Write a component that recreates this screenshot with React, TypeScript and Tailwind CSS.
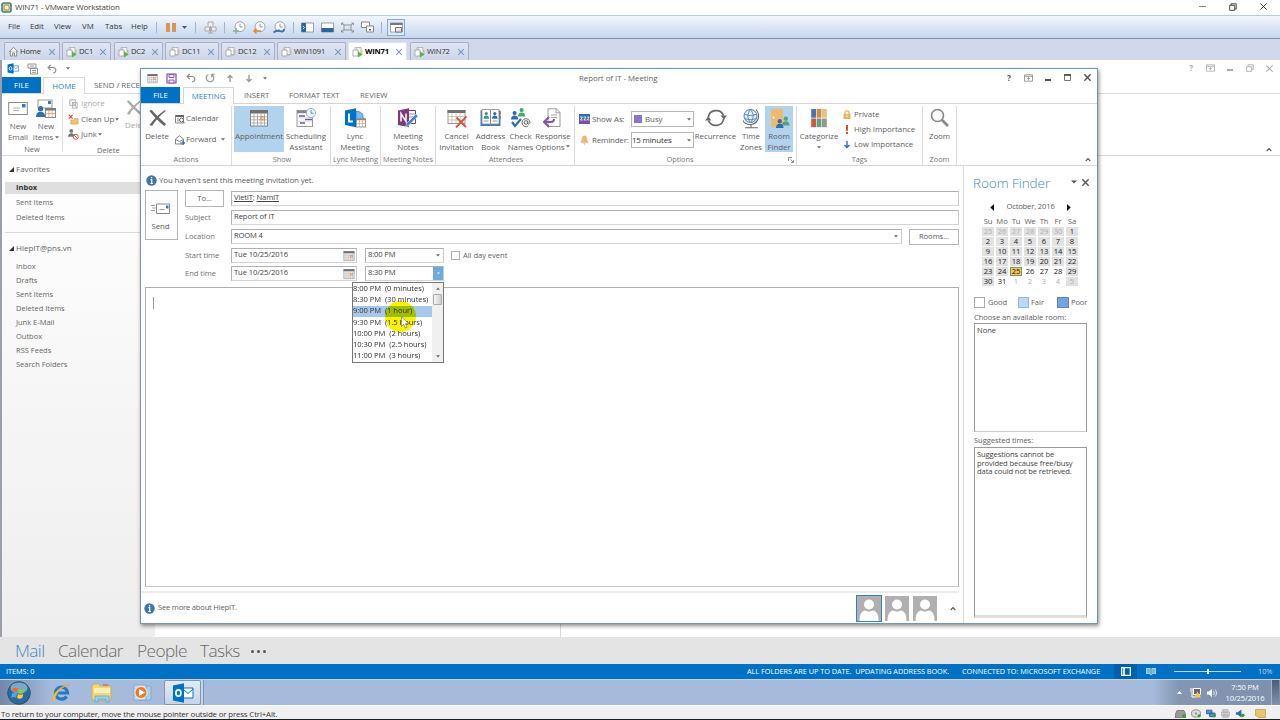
import type { ReactNode } from 'react';
import clsx from 'clsx';

const TABS = [
  { label: 'Home', cls: 'w-[56px]', running: false },
  { label: 'DC1', cls: 'w-[49px] ml-[2px]', running: true },
  { label: 'DC2', cls: 'w-[49px] ml-[3px]', running: true },
  { label: 'DC11', cls: 'w-[54px] ml-[2px]', running: false },
  { label: 'DC12', cls: 'w-[54px] ml-[2px]', running: false },
  { label: 'WIN1091', cls: 'w-[69px] ml-[2px]', running: false },
  { label: 'WIN71', cls: 'w-[59px] ml-[2px]', running: true },
  { label: 'WIN72', cls: 'w-[59px] ml-[3px]', running: true },
];

const FOLDERS = ['Inbox', 'Drafts', 'Sent Items', 'Deleted Items', 'Junk E-Mail', 'Outbox', 'RSS Feeds', 'Search Folders'];

const DURATIONS = [
  ['8:00 PM', '(0 minutes)'],
  ['8:30 PM', '(30 minutes)'],
  ['9:00 PM', '(1 hour)'],
  ['9:30 PM', '(1.5 hours)'],
  ['10:00 PM', '(2 hours)'],
  ['10:30 PM', '(2.5 hours)'],
  ['11:00 PM', '(3 hours)'],
];

const WEEKDAYS = ['Su', 'Mo', 'Tu', 'We', 'Th', 'Fr', 'Sa'];

// Six weeks starting on Sunday 25 September 2016
const DAYS = Array.from({ length: 42 }, (_, i) => {
  if (i < 6) return { n: 25 + i, muted: true, shaded: true };
  if (i < 37) return { n: i - 5, muted: false, shaded: i < 30 || i === 34 || i === 35 };
  return { n: i - 36, muted: true, shaded: i === 41 };
});

/* ---------- icons ---------- */

function Svg({ s = 'w-3 h-3', vb = '0 0 12 12', children }: { s?: string; vb?: string; children: ReactNode }) {
  return <svg className={clsx('shrink-0', s)} viewBox={vb} fill="none">{children}</svg>;
}

function Caret({ className = '' }: { className?: string }) {
  return <Svg s={clsx('w-[4px] h-[3px]', className)} vb="0 0 4 3"><path d="M0 .3h4L2 2.5z" fill="#666" /></Svg>;
}

function Chevron({ className = '' }: { className?: string }) {
  return <Svg s={clsx('w-[6px] h-[5px]', className)} vb="0 0 6 5"><path d="M.7 4 3 1.6 5.3 4" stroke="#555" strokeWidth="1.1" /></Svg>;
}

function VmIcon({ running }: { running: boolean }) {
  return (
    <Svg s="w-[12px] h-[12px]">
      <path d="M4 1.5h5v7H4z" fill="#f4f4f6" stroke="#aaa" strokeWidth=".8" />
      <path d="M1 4h5v6H1z" fill="#fff" stroke="#999" strokeWidth=".8" />
      <path d="M2 2.5 4 1M7 10l3-1.5V4" stroke="#aaa" strokeWidth=".7" />
      {running && <path d="M6 5.2 10.5 8.400 6 11.600z" fill="#5cb840" />}
    </Svg>
  );
}

function CalIcon({ s }: { s: string }) {
  return (
    <Svg s={s} vb="0 0 20 20">
      <rect x="1.5" y="2.5" width="17" height="15.5" fill="#fff" stroke="#888" />
      <rect x="1" y="2" width="18" height="3.5" fill="#707070" />
      <path d="M5 5.5V18M8.500 5.5V18M12 5.5V18M15.500 5.5V18M1.500 8.700h17M1.500 11.800h17M1.500 15h17" stroke="#a0a0a0" strokeWidth=".8" />
      <rect x="12" y="8.800" width="3.500" height="3" fill="#f8d8b8" stroke="#e08048" strokeWidth=".9" />
    </Svg>
  );
}

function Cross({ s, color = '#666', w = 1.4 }: { s: string; color?: string; w?: number }) {
  return <Svg s={s} vb="0 0 10 10"><path d="M1.500 1.500l7 7M8.500 1.500l-7 7" stroke={color} strokeWidth={w} /></Svg>;
}

function DeleteX({ s, color }: { s: string; color: string }) {
  return (
    <Svg s={s} vb="0 0 20 20">
      <path d="M1 2.200 3.400.8C8 6 13 11 19.500 16.800l-2 2.200C11 13.500 6 8.500 1 2.200z" fill={color} />
      <path d="M18.200 1 19.200 2.300C13 7 8 12.500 4 19L1.200 17.800C5.500 11.500 11 6 18.200 1z" fill={color} />
    </Svg>
  );
}

function Undo() {
  return <Svg s="w-[10px] h-[10px]" vb="0 0 10 10"><path d="M3.700 1 1 3.500l2.700 2.500M1.200 3.500h4.600c4 0 4 5 .2 5.500" stroke="#8e8e8e" strokeWidth="1.100" /></Svg>;
}

function Redo() {
  return <Svg s="w-[10px] h-[10px]" vb="0 0 10 10"><path d="M3.400 1.500A3.800 3.800 0 1 0 7 1.700M6.800 4.400V1.300h2.800" stroke="#8e8e8e" strokeWidth="1.100" /></Svg>;
}

function ArrowUp({ down = false, color = '#999' }: { down?: boolean; color?: string }) {
  return (
    <Svg s={clsx('w-[8px] h-[9px]', down && 'rotate-180')} vb="0 0 8 9">
      <path d="M4 8V1.500M1.500 4 4 1.500 6.500 4" stroke={color} strokeWidth="1.400" />
    </Svg>
  );
}

function Info() {
  return (
    <Svg s="w-[11px] h-[11px]" vb="0 0 11 11">
      <circle cx="5.500" cy="5.500" r="5.200" fill="#3c74ac" />
      <path d="M5.600 2v1.500M4.400 4.600h1.300v3.800M4.300 8.500h2.700" stroke="#fff" strokeWidth="1.200" />
    </Svg>
  );
}

function Mail() {
  return (
    <Svg s="w-[20px] h-[18px]" vb="0 0 20 18">
      <rect x=".7" y="3.500" width="18.600" height="12" fill="#fff" stroke="#8a8a8a" />
      <path d="M5 9h7M5 11.500h6" stroke="#aaa" strokeWidth=".9" />
      <rect x="14" y="5" width="3.500" height="3.500" fill="#3a7ab8" />
    </Svg>
  );
}

function Person({ x, y, c, k = 1 }: { x: number; y: number; c: string; k?: number }) {
  return (
    <g transform={`translate(${x} ${y}) scale(${k})`} fill={c}>
      <circle cx="4" cy="2.300" r="2.300" />
      <path d="M0 9.500C0 6.500 1.500 5 4 5s4 1.500 4 4.500z" />
    </g>
  );
}

function NewItems() {
  return (
    <Svg s="w-[20px] h-[20px]" vb="0 0 20 20">
      <rect x="2" y="1" width="14" height="8" fill="#fff" stroke="#999" />
      <rect x="12" y="2" width="3" height="3" fill="#3a7ab8" />
      <Person x={0} y={7} c="#2f6eb0" k={1.150} />
      <rect x="9.500" y="9.500" width="10" height="9" fill="#fff" stroke="#888" />
      <path d="M9 10.500h11" stroke="#777" strokeWidth="2" />
      <path d="M12.800 11v7.500M16.200 11v7.500M9.500 14.500h10" stroke="#e09050" strokeWidth=".7" />
    </Svg>
  );
}

function Scheduling() {
  return (
    <Svg s="w-[20px] h-[20px]" vb="0 0 20 20">
      <rect x="1" y="2.500" width="15.500" height="16" fill="#fff" stroke="#999" />
      <path d="M1 4h15" stroke="#888" strokeWidth="2.500" />
      <path d="M3 8h6M9 11.500h7M4 15h5" stroke="#6d5aa8" strokeWidth="1.600" />
      <path d="M1 9.800h15M1 13.300h15" stroke="#ccc" strokeWidth=".7" />
      <circle cx="15" cy="5" r="4.600" fill="#f2f7fc" stroke="#8cb0d6" />
      <path d="M15 2v3.200h2.600" stroke="#5580b0" strokeWidth=".9" />
    </Svg>
  );
}

function Lync() {
  return (
    <Svg s="w-[22px] h-[20px]" vb="0 0 22 20">
      <path d="M12 3.500c5 0 7 2 7 5v3h-7z" fill="#7dbbe8" stroke="#3a8ccc" />
      <path d="M1 2.500 12 .3v19L1 17z" fill="#0072c6" />
      <path d="M5 5.500v8h4" stroke="#fff" strokeWidth="1.800" />
      <rect x="12.500" y="10.500" width="9" height="8.500" fill="#fff" stroke="#999" />
      <path d="M12 11.500h10" stroke="#888" strokeWidth="1.500" />
      <path d="M15.500 12v7M18.500 12v7M12.500 15.500h9" stroke="#e0a070" strokeWidth=".7" />
    </Svg>
  );
}

function OneNote() {
  return (
    <Svg s="w-[22px] h-[20px]" vb="0 0 22 20">
      <path d="M11 2.500h7.500v13H11z" fill="#fff" stroke="#80397b" />
      <path d="M12 6h6M12 9h6" stroke="#b080b0" />
      <path d="M1 2.500 12 .3v19L1 17z" fill="#80397b" />
      <path d="M4 13.500v-8l5 8v-8" stroke="#fff" strokeWidth="1.500" />
      <path d="m8.500 19 1-3.500L19 6l2 2.200-9.500 9.500z" fill="#3a86cc" stroke="#fff" strokeWidth=".5" />
    </Svg>
  );
}

function CancelInvite() {
  return (
    <Svg s="w-[20px] h-[20px]" vb="0 0 20 20">
      <rect x="1" y="2.500" width="17" height="13" fill="#fff" stroke="#999" />
      <path d="M.5 3.500h18" stroke="#707070" strokeWidth="3" />
      <path d="M5 5v10.500M9 5v10.500M13 5v10.500M1 8.500h17M1 12h17" stroke="#b5b5a0" strokeWidth=".7" />
      <path d="m9.500 9.500 9.500 9.500M19.500 8.500 9 19.500" stroke="#d9503c" strokeWidth="1.900" />
    </Svg>
  );
}

function AddressBook() {
  return (
    <Svg s="w-[21px] h-[20px]" vb="0 0 21 20">
      <path d="M.5 2.500h20v15.500H.5z" fill="#3d7ebc" />
      <path d="M2 1.500h8l.5.700.5-.7h8V16h-8l-.5 1-.5-1H2z" fill="#fff" stroke="#888" strokeWidth=".8" />
      <path d="M10.500 2v14.500" stroke="#888" />
      <Person x={3.500} y={4} c="#3d9a78" k={.7} />
      <Person x={12} y={4} c="#2f6eb0" k={.7} />
      <path d="M3.500 13h5M12.500 13h5" stroke="#999" />
      <path d="M20 3.500v3" stroke="#e05030" strokeWidth="1.500" />
      <path d="M20 8v3" stroke="#3d9a78" strokeWidth="1.500" />
    </Svg>
  );
}

function CheckNames() {
  return (
    <Svg s="w-[21px] h-[20px]" vb="0 0 21 20">
      <Person x={8} y={0} c="#4aa27c" k={.9} />
      <Person x={1} y={3} c="#2f6eb0" k={.9} />
      <path d="m2 14 3 4 6-7" stroke="#2f6eb0" strokeWidth="2.200" />
      <circle cx="16" cy="14.500" r="5" fill="#fff" />
      <circle cx="16" cy="14.500" r="1.800" stroke="#666" strokeWidth="1" />
      <path d="M17.800 12.700v2.600c0 1.500 2.200 1 2.200-1a4 4 0 1 0-1.700 3.700" stroke="#666" strokeWidth="1" />
    </Svg>
  );
}

function ResponseOptions() {
  return (
    <Svg s="w-[20px] h-[20px]" vb="0 0 20 20">
      <path d="M5 .8h8.500L17 4.500v14H5z" fill="#fff" stroke="#999" />
      <path d="M13 .8v4h4M8 7h6M8 9.500h6" stroke="#999" strokeWidth=".9" />
      <path d="M6 9 1 14l5 5M1.500 14H8c2 0 3-.7 3-3" stroke="#8452a8" strokeWidth="2" />
    </Svg>
  );
}

function Recurrence() {
  return (
    <Svg s="w-[22px] h-[20px]" vb="0 0 22 20">
      <path d="M3.200 9.500A8 8 0 0 1 18.500 7.500M18.800 10.500A8 8 0 0 1 3.500 12.500" stroke="#6a6a6a" strokeWidth="1.800" />
      <path d="M15.500 7.500h6.500l-3.200 4zM0 12.500h6.500L3.200 8.500z" fill="#6a6a6a" />
    </Svg>
  );
}

function Globe() {
  return (
    <Svg s="w-[20px] h-[21px]" vb="0 0 20 21">
      <circle cx="9.500" cy="8" r="6.500" fill="#e3f0fb" stroke="#4b7fb8" />
      <path d="M3.500 6c4 2 8 2 12 0M3.500 10.500c4 1.500 8 1.500 12 0M9.500 1.500c-3.500 4-3.500 9 0 13M9.500 1.500c3.500 4 3.500 9 0 13" stroke="#4b7fb8" strokeWidth=".9" />
      <path d="M15 1.500c4.500 5 3 14-5 15-4 .3-7-2-8-4M10 16.500v3M4 19.700h13" stroke="#6a6a6a" strokeWidth="1.100" />
    </Svg>
  );
}

function RoomIcon() {
  return (
    <Svg s="w-[21px] h-[21px]" vb="0 0 21 21">
      <path d="M2 1h12v18.500H2z" fill="#efba6c" />
      <circle cx="4.500" cy="9.500" r="1" fill="#fff" />
      <Person x={13} y={8.500} c="#55a382" k={.95} />
      <Person x={7} y={11} c="#2f6eb0" k={.95} />
    </Svg>
  );
}

function Categorize() {
  const fills = ['#4476b4', '#d68840', '#eac07c', '#cf563c', '#62a088', '#8f9a92'];
  return (
    <Svg s="w-[20px] h-[20px]" vb="0 0 20 20">
      {fills.map((f, i) => <rect key={f} x={2.200 + (i % 3) * 5.400} y={i < 3 ? 1 : 10.500} width="4.800" height="8.700" fill={f} />)}
    </Svg>
  );
}

function Outlook({ s }: { s: string }) {
  return (
    <Svg s={s} vb="0 0 22 20">
      <path d="M10 5h11v10H10z" fill="#fff" stroke="#0072c6" />
      <path d="m11 6 5 4.500L21 6" stroke="#0072c6" />
      <path d="M1 2.500 12 .3v19.400L1 17.500z" fill="#0072c6" />
      <ellipse cx="6.400" cy="10" rx="2.500" ry="3.200" stroke="#fff" strokeWidth="1.700" />
    </Svg>
  );
}

/* ---------- host window (VMware) ---------- */

function Clock({ accent, kind }: { accent: string; kind: 'add' | 'back' | 'wrench' }) {
  return (
    <Svg s="w-[13px] h-[13px]" vb="0 0 13 13">
      <circle cx="7" cy="5.700" r="5" fill="#fbfbfb" stroke="#a2a2a2" />
      <path d="M7 2.800V6h2.600" stroke="#999" />
      {kind === 'add' && <path d="M0 10h6M3 7v6" stroke={accent} strokeWidth="1.400" />}
      {kind === 'back' && <path d="M1 10h7M3.500 7.500 1 10l2.500 2.500" stroke={accent} strokeWidth="1.500" />}
      {kind === 'wrench' && <path d="M.5 11.500 3 10l4-.5M7 9.500a2.200 2.200 0 0 0 4-1.500" stroke={accent} strokeWidth="2" />}
    </Svg>
  );
}

function Sep({ className }: { className?: string }) {
  return <div className={clsx('w-px h-[11px] bg-[#a8b4c4] shrink-0', className)} />;
}

function HostHeader() {
  return (
    <>
      <div className="h-[15px] bg-white flex items-center pl-[1px] text-[8px] text-[#444] shrink-0">
        <Svg s="w-[11px] h-[11px]" vb="0 0 11 11">
          <rect x="1" y="1" width="9" height="9" rx="2" fill="#d8e4a8" stroke="#3f7d9c" strokeWidth="1.600" />
          <rect x="3" y="3" width="5" height="5" rx="1" fill="#fff" stroke="#e09a28" strokeWidth="1.300" />
        </Svg>
        <span className="ml-[3px] whitespace-nowrap tracking-[-0.18px]">WIN71 - VMware Workstation</span>
        <div className="ml-auto flex items-center pr-[12px] -mt-[2px]">
          <div className="w-[7px] h-px bg-[#888] mr-[23px]" />
          <Svg s="w-[8px] h-[8px] mr-[22px]" vb="0 0 8 8"><path d="M.7 2.300h5v5h-5zM2 2V.8h5.200V6H6" stroke="#333" strokeWidth=".9" /></Svg>
          <Cross s="w-[9px] h-[9px]" color="#333" w={1} />
        </div>
      </div>
      <div className="h-[24px] border-t border-[#bccadd] border-b-[1.500px] border-b-[#8391a5] bg-linear-to-b from-[#f2f7fd] to-[#c6d6ec] flex items-center text-[7.800px] text-[#333] shrink-0">
        <div className="flex pb-[1px]">
          <span className="ml-[8px] w-[22px]">File</span>
          <span className="w-[24px]">Edit</span>
          <span className="w-[28px]">View</span>
          <span className="w-[23px]">VM</span>
          <span className="w-[26px]">Tabs</span>
          <span className="w-[25px]">Help</span>
        </div>
        <Sep />
        <div className="flex gap-[2px] ml-[9px]">
          <div className="w-[4px] h-[9px] bg-[#dc9450]" />
          <div className="w-[4px] h-[9px] bg-[#dc9450]" />
        </div>
        <Svg s="w-[5px] h-[3px] ml-[6px]" vb="0 0 5 3"><path d="M0 0h5L2.500 3z" fill="#3c5a88" /></Svg>
        <Sep className="ml-[8px]" />
        <Svg s="w-[13px] h-[13px] ml-[8px]" vb="0 0 13 13">
          <path d="M4 5V1h5v4M1 6h4.500v4H1zM7.500 6H12v4H7.500zM6.500 5v7M4 12h5" stroke="#a2a2a2" fill="#eee" strokeWidth=".9" />
        </Svg>
        <Sep className="ml-[7px]" />
        <div className="flex ml-[8px] gap-[7px]">
          <Clock accent="#8fb08c" kind="add" />
          <Clock accent="#dc8a3c" kind="back" />
          <Clock accent="#3a70b0" kind="wrench" />
        </div>
        <Sep className="ml-[7px]" />
        <div className="flex ml-[7px] gap-[7px] items-center">
          <Svg s="w-[13px] h-[11px]" vb="0 0 13 11"><path d="M.5 1h12v9H.5z" fill="#fff" stroke="#888" strokeWidth=".8" /><path d="M.5 1h4.500v9H.5z" fill="#2e64a4" /><path d="m2 4 1.500 1.500L2 7" stroke="#fff" strokeWidth=".8" /></Svg>
          <Svg s="w-[13px] h-[11px]" vb="0 0 13 11"><path d="M.5 1h12v9H.5z" fill="#fff" stroke="#888" strokeWidth=".8" /><path d="M.5 6h12v4H.5z" fill="#2e64a4" /></Svg>
          <Svg s="w-[13px] h-[11px]" vb="0 0 13 11"><path d="M3 3h7v5H3zM.5 3V1h2M12.500 3V1h-2M.5 8v2h2M12.500 8v2h-2M1 1.500l2 1.500M12 1.500 10 3M1 9.500 3 8M12 9.500 10 8" stroke="#888" strokeWidth=".9" /></Svg>
          <Svg s="w-[13px] h-[12px]" vb="0 0 13 12"><path d="M.5 1h8v5.500h-8z" fill="#fff" stroke="#888" /><path d="M5.500 5h7v6h-7z" fill="#fff" stroke="#888" /><path d="M8 8h2v1.500H8z" fill="#666" /></Svg>
        </div>
        <Sep className="ml-[7px]" />
        <div className="ml-[5px] w-[18px] h-[17px] border border-[#86aad4] bg-[#dce9f8] flex items-center justify-center">
          <Svg s="w-[13px] h-[11px]" vb="0 0 13 11"><path d="M.5 1h12v9H.5z" fill="#fff" stroke="#888" strokeWidth=".8" /><path d="M.5 2h12" stroke="#777" strokeWidth="2" /><path d="M5.500 5.500h6V10h-6z" fill="#e8e8e8" stroke="#777" /></Svg>
        </div>
      </div>
      <div className="h-[21px] bg-[#d2d8ec] flex items-end pl-[4px] text-[7.600px] text-[#333] shrink-0">
        {TABS.map(t => {
          const active = t.label === 'WIN71';
          return (
            <div
              key={t.label}
              className={clsx(
                'h-[18px] flex items-center pl-[3px] pr-[3px] border border-b-0 rounded-t-[2px] shrink-0',
                active ? 'bg-white border-[#dde3ef] font-bold text-black' : 'border-[#a3b0c8] bg-linear-to-b from-[#dfe5f3] to-[#cdd6e8]',
                t.cls,
              )}
            >
              {t.label === 'Home' ? (
                <Svg s="w-[11px] h-[11px]"><path d="M1 6.500 6 1.500l5 5M2.500 5.500V11h2.500V7.500h2V11h2.500V5.500" stroke="#777" fill="#f7f7f7" strokeWidth=".9" /></Svg>
              ) : <VmIcon running={t.running} />}
              <span className="ml-[1px] tracking-[-0.15px]">{t.label}</span>
              <Cross s="w-[8px] h-[8px] ml-auto" color="#7699be" w={1.300} />
            </div>
          );
        })}
      </div>
    </>
  );
}

/* ---------- Outlook main window ---------- */

function OutlookMain() {
  return (
    <div className="h-[577px] flex flex-col bg-white border-l-2 border-[#9a9fa8] shrink-0">
      <div className="h-[17px] flex items-center pl-[5px] shrink-0">
        <Outlook s="w-[12px] h-[11px]" />
        <Svg s="w-[12px] h-[12px] ml-[8px]"><path d="M1 1h8v4H1zM3.500 5.500h7V11h-7zM5 7.500h4M5 9.300h4M3 3h4" stroke="#888" strokeWidth=".9" /></Svg>
        <div className="ml-[8px] flex items-center"><Undo /><Caret className="ml-[9px]" /></div>
        <div className="ml-auto flex items-center pr-[6px] text-[8px] text-[#aaa] font-bold">
          <span className="mr-[13px]">?</span>
          <Svg s="w-[9px] h-[8px] mr-[12px]" vb="0 0 9 8"><path d="M.5.800h8v6.400h-8zM.5 2.300h8M4.500 6.500V3.500M3.200 4.800 4.500 3.500l1.300 1.300" stroke="#aaa" strokeWidth=".8" /></Svg>
          <div className="w-[6px] h-[1.500px] bg-[#aaa] mr-[13px] mt-[3px]" />
          <Svg s="w-[8px] h-[8px] mr-[11px]" vb="0 0 8 8"><path d="M.7 2.700h5v4.600h-5zM2 2.500V.8h5.200V5.500H6" stroke="#aaa" strokeWidth=".9" /></Svg>
          <Cross s="w-[9px] h-[9px]" color="#aaa" w={1.200} />
        </div>
      </div>
      <div className="h-[17px] flex items-stretch border-b border-[#d9d9d9] text-[7.900px] text-[#666] shrink-0">
        <div className="w-[39px] bg-[#0072c6] text-white flex items-center justify-center">FILE</div>
        <div className="ml-[2px] w-[42px] -mb-px bg-white border border-b-0 border-[#d9d9d9] text-[#2a82bd] flex items-center justify-center">HOME</div>
        <div className="ml-[9px] flex items-center whitespace-nowrap">SEND / RECEIVE</div>
      </div>
      <div className="h-[62px] flex border-b border-[#d9d9d9] text-[7.900px] leading-[10.500px] text-[#666] shrink-0">
        <div className="w-[61px] border-r border-[#e2e2e2] my-[3px] flex flex-col">
          <div className="flex mt-[2px] h-[46px]">
            <div className="w-[32px] flex flex-col items-center text-center">
              <Mail />
              <span className="mt-[4px]">New<br />Email</span>
            </div>
            <div className="w-[24px] flex flex-col items-center text-center">
              <NewItems />
              <span className="mt-[2px] whitespace-nowrap">New<br />Items <Caret className="inline" /></span>
            </div>
          </div>
          <div className="text-center text-[7.500px] mt-[2px]">New</div>
        </div>
        <div className="flex flex-col pl-[5px]">
          <div className="h-[48px] mt-[3px] flex">
            <div className="w-[58px] flex flex-col gap-[4.500px] mt-[1px]">
              <div className="flex items-center text-[#aaa]">
                <Svg s="w-[11px] h-[11px] mr-[2px]"><path d="M2 2h6v6H2zM5 5h5v6H5zM4 4l6 7" stroke="#aaa" /></Svg>Ignore
              </div>
              <div className="flex items-center whitespace-nowrap">
                <Svg s="w-[11px] h-[11px] mr-[2px]"><path d="M1 1l4 4M5 1 1 5" stroke="#d04838" strokeWidth="1.300" /><path d="M3 7h3l1-2h4v6H3z" fill="#f0c478" stroke="#d89a48" strokeWidth=".7" /></Svg>
                Clean Up <Caret className="ml-[1px]" />
              </div>
              <div className="flex items-center">
                <Svg s="w-[11px] h-[11px] mr-[2px]"><g transform="scale(.9)"><Person x={0} y={0} c="#777" /></g><circle cx="8.500" cy="8.500" r="2.800" fill="#fff" stroke="#d04838" /><path d="m6.700 6.700 3.600 3.600" stroke="#d04838" /></Svg>
                Junk <Caret className="ml-[1px]" />
              </div>
            </div>
            <div className="w-[26px] text-[#aaa] flex flex-col">
              <DeleteX s="w-[16px] h-[17px] mt-[2px]" color="#aaa" />
              <span className="mt-[4px] -ml-[1px]">Delete</span>
            </div>
          </div>
          <div className="text-[7.500px] pl-[29px]">Delete</div>
        </div>
        <div className="ml-auto self-end pr-[8px] pb-[3px]"><Chevron /></div>
      </div>
      <div className="flex-1 flex min-h-0">
        <div className="w-[153px] bg-linear-to-b from-white via-[#f6f6f6] via-50% to-[#eeeeee] text-[7.500px] text-[#666] flex flex-col">
          <div className="h-[26px] flex items-center pl-[7px] pt-[1px] text-[8px]">
            <Svg s="w-[5px] h-[5px] mr-[2px]" vb="0 0 5 5"><path d="M5 0v5H0z" fill="#333" /></Svg>Favorites
          </div>
          <div className="h-[12px] ml-[3px] pl-[11px] pb-[1px] bg-[#dfdfdf] flex items-center font-bold text-[#333]">Inbox</div>
          <div className="h-[15px] mt-[1px] pl-[14px] flex items-center">Sent Items</div>
          <div className="h-[15px] pl-[14px] flex items-center">Deleted Items</div>
          <div className="mt-[7px] ml-[3px] h-px bg-[#d8d8d8]" />
          <div className="h-[30px] flex items-center pl-[7px] text-[8px]">
            <Svg s="w-[5px] h-[5px] mr-[2px]" vb="0 0 5 5"><path d="M5 0v5H0z" fill="#333" /></Svg>HiepIT@pns.vn
          </div>
          <div className="-mt-[3px]">
            {FOLDERS.map(f => <div key={f} className="h-[14px] pl-[14px] flex items-center">{f}</div>)}
          </div>
        </div>
        <div className="w-[406px] border-r border-[#d8d8d8]" />
      </div>
    </div>
  );
}

/* ---------- meeting window ---------- */

function Group({ label, className, children, launcher }: { label: string; className: string; children: ReactNode; launcher?: boolean }) {
  return (
    <div className={clsx('shrink-0 mt-[2px] border-r border-[#dcdcdc] flex flex-col', className)}>
      <div className="h-[48px] flex shrink-0">{children}</div>
      <div className="flex h-[11px] items-center justify-center text-[7.400px] text-[#777] whitespace-nowrap">
        {launcher && <span className="w-[9px]" />}
        <span className={launcher ? 'flex-1 text-center -ml-[12px]' : ''}>{label}</span>
        {launcher && <Svg s="w-[6px] h-[6px] mr-[2px]" vb="0 0 6 6"><path d="M.5 4V.5H4M2.500 2.500l3 3M5.500 3v2.500H3" stroke="#777" strokeWidth=".8" /></Svg>}
      </div>
    </div>
  );
}

function Big({ icon, className, lines, on, caret }: { icon: ReactNode; className: string; lines: string[]; on?: boolean; caret?: boolean }) {
  return (
    <div className={clsx('h-[46px] shrink-0 flex flex-col items-center pt-[2px] text-center leading-[10.500px] whitespace-nowrap', on && 'bg-[#b1d3ed]', className)}>
      <div className="h-[23px] flex items-start justify-center">{icon}</div>
      {lines.map((l, i) => (
        <span key={l} className="flex items-center gap-[2px]">{l}{caret && i === lines.length - 1 && <Caret />}</span>
      ))}
    </div>
  );
}

function Ribbon() {
  return (
    <div className="h-[63px] border-y border-[#d5d5d5] flex text-[7.900px] tracking-[-0.03px] text-[#606060] shrink-0">
      <Group label="Actions" className="w-[91px]">
        <Big className="w-[32px]" icon={<DeleteX s="w-[19px] h-[18px] mt-[1px]" color="#666" />} lines={['Delete']} />
        <div className="flex flex-col pl-[2px] pt-[7px] gap-[10px] leading-[11px]">
          <div className="flex items-center">
            <Svg s="w-[10px] h-[10px] mr-[1px]" vb="0 0 10 10"><path d="M.5 1.500h8V9h-8z" stroke="#888" /><path d="M.5 2h8.500" stroke="#666" strokeWidth="2" /><path d="M2 5h2M2 7h2" stroke="#888" /><circle cx="6.500" cy="6" r="2" fill="#fff" stroke="#666" /><path d="m8 7.500 2 2" stroke="#666" /></Svg>
            Calendar
          </div>
          <div className="flex items-center">
            <Svg s="w-[10px] h-[10px] mr-[1px]" vb="0 0 10 10"><path d="M.5 9V4L4.500.8 8.500 4v5zM.5 4.500l4 2 4-2" stroke="#777" fill="#fff" strokeWidth=".9" /><path d="M5 8h4M7.500 6.300 9.300 8 7.500 9.700" stroke="#2f6eb0" strokeWidth="1.200" /></Svg>
            Forward <Caret className="ml-[5px]" />
          </div>
        </div>
      </Group>
      <Group label="Show" className="w-[99px] pl-[2px]">
        <Big on className="w-[50px]" icon={<CalIcon s="w-[20px] h-[20px]" />} lines={['Appointment']} />
        <Big className="w-[44px]" icon={<Scheduling />} lines={['Scheduling', 'Assistant']} />
      </Group>
      <Group label="Lync Meeting" className="w-[50px]">
        <Big className="w-[48px]" icon={<Lync />} lines={['Lync', 'Meeting']} />
      </Group>
      <Group label="Meeting Notes" className="w-[55px]">
        <Big className="w-[54px]" icon={<OneNote />} lines={['Meeting', 'Notes']} />
      </Group>
      <Group label="Attendees" className="w-[139px] pl-[2px]">
        <Big className="w-[37px]" icon={<CancelInvite />} lines={['Cancel', 'Invitation']} />
        <Big className="w-[31px]" icon={<AddressBook />} lines={['Address', 'Book']} />
        <Big className="w-[29px]" icon={<CheckNames />} lines={['Check', 'Names']} />
        <Big className="w-[36px]" icon={<ResponseOptions />} lines={['Response', 'Options']} caret />
      </Group>
      <Group label="Options" className="w-[222px]" launcher>
        <div className="w-[119px] pl-[4px] pt-[5px] flex flex-col gap-[5px]">
          <div className="flex items-center h-[16px]">
            <Svg s="w-[11px] h-[10px]" vb="0 0 11 10"><path d="M0 0h11v5H0z" fill="#2f6eb0" /><path d="M0 5h11v5H0z" fill="#7a4fa0" /><path d="M1 3h2.500L1.500 6H4M4.500 3H7L5 6h2.500M8 3h2L8.500 6h2" stroke="#fff" strokeWidth=".8" /></Svg>
            <span className="ml-[2px] w-[39px]">Show As:</span>
            <div className="w-[63px] h-[16px] border border-[#b5b5b5] flex items-center pl-[2px] pr-[2px]">
              <div className="w-[8px] h-[8px] bg-[#8a76c8] mr-[3px]" />Busy<Caret className="ml-auto" />
            </div>
          </div>
          <div className="flex items-center h-[16px]">
            <Svg s="w-[11px] h-[10px]" vb="0 0 11 10"><path d="M5.500.5c3 0 2.500 4 3 5.500l1.500 1.800H1L2.500 6C3 4.500 2.500.5 5.500.5zM4 8.300h3L5.500 10z" fill="#ecb871" /></Svg>
            <span className="ml-[2px] w-[39px] tracking-[-0.15px]">Reminder:</span>
            <div className="w-[63px] h-[16px] border border-[#b5b5b5] flex items-center pr-[2px] text-[#333] tracking-[-0.15px]">15 minutes<Caret className="ml-auto" /></div>
          </div>
        </div>
        <Big className="w-[43px]" icon={<Recurrence />} lines={['Recurrence']} />
        <Big className="w-[28px]" icon={<Globe />} lines={['Time', 'Zones']} />
        <Big on className="w-[28px]" icon={<RoomIcon />} lines={['Room', 'Finder']} />
      </Group>
      <Group label="Tags" className="w-[126px]">
        <div className="w-[44px] flex flex-col items-center">
          <div className="h-[25px] pt-[2px]"><Categorize /></div>
          <span className="leading-[10.500px]">Categorize</span>
          <Caret className="mt-[4px]" />
        </div>
        <div className="flex flex-col pl-[2px] pt-[1px]">
          <div className="h-[15px] flex items-center">
            <Svg s="w-[8px] h-[9px] mr-[3px]" vb="0 0 8 9"><path d="M2 4V2.500C2 .2 6 .2 6 2.500V4" stroke="#e6b45e" strokeWidth="1.300" /><path d="M.5 3.800h7V9h-7z" fill="#e6b45e" /><path d="M4 5.500V7" stroke="#fff" /></Svg>
            Private
          </div>
          <div className="h-[15px] flex items-center">
            <Svg s="w-[8px] h-[9px] mr-[3px]" vb="0 0 8 9"><path d="M4 0v5.800M4 7v2" stroke="#d2502f" strokeWidth="2" /></Svg>
            High Importance
          </div>
          <div className="h-[15px] flex items-center"><span className="mr-[3px]"><ArrowUp down color="#2f6eb0" /></span>Low Importance</div>
        </div>
      </Group>
      <Group label="Zoom" className="w-[34px]">
        <Big className="w-[33px]" icon={<Svg s="w-[21px] h-[20px]" vb="0 0 21 20"><circle cx="8.500" cy="7.500" r="6" fill="#fbfbfb" stroke="#888" strokeWidth="1.600" /><path d="m13 12 6 6" stroke="#888" strokeWidth="2.600" /></Svg>} lines={['Zoom']} />
      </Group>
      <div className="ml-auto self-end pr-[6px] pb-[3px]"><Chevron /></div>
    </div>
  );
}

function Label({ children }: { children: string }) {
  return <span className="w-[46px] shrink-0 text-[#707070]">{children}</span>;
}

const FIELD = 'border border-[#b0b0b0] border-b-[#d4d4d4] border-r-[#cccccc] bg-white flex items-center pl-[2px] pb-[1px] text-[#444]';

function DateBox() {
  return (
    <div className={clsx('w-[126px] h-[15px] justify-between pr-[1px] tracking-[-0.1px]', FIELD)}>
      Tue 10/25/2016
      <CalIcon s="w-[12px] h-[12px] mt-[1px]" />
    </div>
  );
}

function Durations() {
  return (
    <div className="absolute left-[-14px] top-[15px] w-[92px] h-[81px] border border-[#777] bg-white flex z-10 text-[7.600px] tracking-[-0.05px] text-[#333]">
      <div className="flex-1 flex flex-col">
        {DURATIONS.map(([t, d]) => (
          <div key={t} className={clsx('h-[11.300px] flex items-center whitespace-pre', t === '9:00 PM' && 'bg-[#a5c8ec]')}>{t}  {d}</div>
        ))}
      </div>
      <div className="w-[11px] bg-[#f0f0f0] flex flex-col items-center py-[4px]">
        <Caret className="rotate-180" />
        <div className="w-[9px] h-[11px] mt-[4px] border border-[#aaa] bg-linear-to-r from-[#f5f5f5] to-[#cfcfcf] rounded-[1px]" />
        <Caret className="mt-auto" />
      </div>
      {/* click highlight and pointer */}
      <div className="absolute left-[32px] top-[18px] w-[31px] h-[31px] rounded-full bg-[#f6f200] mix-blend-multiply" />
      <Svg s="absolute left-[48px] top-[33px] w-[8px] h-[13px]" vb="0 0 8 13">
        <path d="M.6.8v9.500l2.200-2 1.500 3.700 1.700-.8-1.500-3.500h3z" fill="#fff" stroke="#777" strokeWidth=".7" />
      </Svg>
    </div>
  );
}

function Form() {
  return (
    <div className="w-[823px] border-r border-[#dcdcdc] flex flex-col text-[7.600px] tracking-[-0.05px] shrink-0">
      <div className="h-[24px] flex items-center pl-[5px] pt-[4px] text-[7.900px] tracking-[-0.13px] text-[#606060]">
        <Info /><span className="ml-[2px]">You haven't sent this meeting invitation yet.</span>
      </div>
      <div className="flex pl-[4px] h-[97px]">
        <div className="w-[33px] h-[50px] border border-[#b5b5b5] bg-[#fdfdfd] flex flex-col items-center pt-[11px] text-[7.900px] text-[#606060]">
          <Svg s="w-[20px] h-[14px] mr-[2px]" vb="0 0 20 14"><path d="M5.500 2h13v9.500h-13z" fill="#fff" stroke="#888" /><path d="M0 3.500h4M1.500 6h3M0 8.500h4M8.500 7.500h5" stroke="#999" /><path d="M15 3.500h2.500v3H15z" fill="#3a7ab8" /></Svg>
          <span className="mt-[5px] mr-[2px]">Send</span>
        </div>
        <div className="ml-[7px] w-[774px] flex flex-col">
          <div className="h-[18px] flex items-start">
            <div className="w-[39px] h-[17px] border border-[#b5b5b5] flex items-center justify-center text-[#606060] mr-[7px]">To...</div>
            <div className={clsx('mt-[1px] flex-1 h-[15px] tracking-[-0.15px]', FIELD)}><u>VietIT</u>;&nbsp;<u>NamIT</u></div>
          </div>
          <div className="mt-[2px] h-[15px] flex items-center"><Label>Subject</Label><div className={clsx('flex-1 h-[15px]', FIELD)}>Report of IT</div></div>
          <div className="mt-[4px] h-[15px] flex items-center">
            <Label>Location</Label>
            <div className={clsx('w-[671px] h-[15px] pr-[3px] justify-between tracking-[-0.15px]', FIELD)}>ROOM 4<Caret /></div>
            <div className="ml-[7px] flex-1 h-[16px] border border-[#b5b5b5] flex items-center justify-center text-[#606060]">Rooms...</div>
          </div>
          <div className="mt-[4px] h-[15px] flex items-center">
            <Label>Start time</Label>
            <DateBox />
            <div className={clsx('ml-[8px] w-[79px] h-[15px] pr-[3px] justify-between tracking-[-0.15px]', FIELD)}>8:00 PM<Caret className="mt-[1px]" /></div>
            <div className="ml-[7px] w-[9px] h-[9px] border border-[#b0b0b0]" />
            <span className="ml-[3px] text-[#606060]">All day event</span>
          </div>
          <div className="mt-[3px] h-[15px] flex items-center">
            <Label>End time</Label>
            <DateBox />
            <div className={clsx('relative ml-[8px] w-[79px] h-[15px] tracking-[-0.15px]', FIELD, 'border-[#5a9bd0]')}>
              8:30 PM
              <div className="ml-auto -mb-[1px] h-[13px] w-[10px] bg-[#6aace0] flex items-center justify-center">
                <Svg s="w-[5px] h-[3px]" vb="0 0 4 3"><path d="M0 .3h4L2 2.500z" fill="#fff" stroke="#666" strokeWidth=".3" /></Svg>
              </div>
              <Durations />
            </div>
          </div>
        </div>
      </div>
      <div className="ml-[4px] w-[814px] h-[300px] border border-[#b0b0b0] border-b-[#c8c8c8] pl-[7px] pt-[9px]">
        <div className="w-px h-[12px] bg-[#999]" />
      </div>
      <div className="mt-[4px] border-t-2 border-[#ececec] flex-1 flex items-center pl-[3px] pr-[3px] text-[#606060] mr-[4px]">
        <Info /><span className="ml-[3px] tracking-[-0.2px]">See more about HiepIT.</span>
        <div className="ml-auto flex items-center gap-[3px]">
          {[0, 1, 2].map(i => (
            <div key={i} className={clsx(i === 0 && 'border border-[#2f80c4]', i === 2 && 'ml-[1px]', 'bg-[#b0b0b0]')}>
              <svg className="w-[24px] h-[25px]" viewBox="0 0 24 25">
                <circle cx="12" cy="8.500" r="5" fill="#fff" />
                <path d="M2.500 25c0-7 2-10 6-10.500 2 1.500 5 1.500 7 0 4 .5 6 3.500 6 10.500z" fill="#fff" />
              </svg>
            </div>
          ))}
        </div>
        <Chevron className="ml-[13px]" />
      </div>
    </div>
  );
}

function RoomFinder() {
  return (
    <div className="flex-1 pl-[10px] text-[7.600px] tracking-[-0.06px] text-[#606060] flex flex-col">
      <div className="flex items-center h-[24px] mt-[6px]">
        <span className="-ml-[1px] text-[13.500px] text-[#3c8ac4] font-light w-[98px] whitespace-nowrap">Room Finder</span>
        <Svg s="w-[6px] h-[4px] -mt-[4px]" vb="0 0 6 4"><path d="M0 .5h6l-3 3z" fill="#555" /></Svg>
        <span className="ml-[4px] -mt-[4px] flex"><Cross s="w-[9px] h-[9px]" color="#555" w={1.500} /></span>
      </div>
      <div className="flex items-center h-[20px] mt-px pl-[16px]">
        <Svg s="w-[4px] h-[7px]" vb="0 0 4 7"><path d="M4 0v7L.3 3.500z" fill="#111" /></Svg>
        <span className="w-[73px] text-center tracking-[-0.15px]">October, 2016</span>
        <Svg s="w-[4px] h-[7px]" vb="0 0 4 7"><path d="M0 0v7l3.700-3.500z" fill="#111" /></Svg>
      </div>
      <div className="grid grid-cols-[repeat(7,14px)] ml-[7px] text-center leading-[10px] mt-[-1px]">
        {WEEKDAYS.map(d => <span key={d} className="h-[11px]">{d}</span>)}
        {DAYS.map((d, i) => (
          <span
            key={i}
            className={clsx(
              'h-[9px] mx-[1px] mb-[1px] leading-[9px]',
              d.muted ? 'text-[#b0b0b0]' : 'text-[#222]',
              i === 30 ? 'bg-[#f0c75e] outline outline-[#7c9a6a] -outline-offset-1' : d.shaded && 'bg-[#e1e1e1]',
            )}
          >
            {d.n}
          </span>
        ))}
      </div>
      <div className="flex items-center h-[11px] mt-[10px]">
        <div className="w-[11px] h-[11px] border border-[#aaa] mr-[3px]" /><span className="w-[30px]">Good</span>
        <div className="w-[11px] h-[11px] border border-[#9ab4dc] bg-[#bdd6fa] mr-[2px]" /><span className="w-[26px]">Fair</span>
        <div className="w-[12px] h-[11px] border border-[#5a84c4] bg-[#74a2e2] mr-[2px]" /><span className="tracking-[-0.15px]">Poor</span>
      </div>
      <div className="h-[15px] flex items-end">Choose an available room:</div>
      <div className="w-[113px] h-[109px] border border-[#999] border-b-[#ccc] pl-[2px] pt-[1px] leading-[11px] text-[#444]">None</div>
      <div className="h-[15px] flex items-end pb-[1px]">Suggested times:</div>
      <div className="w-[113px] h-[171px] border border-[#999] border-b-[3px] border-b-[#dedede] pl-[2px] pt-[2px] leading-[8.700px] text-[#444] whitespace-nowrap tracking-[-0.12px]">
        Suggestions cannot be<br />provided because free/busy<br />data could not be retrieved.
      </div>
    </div>
  );
}

function MeetingWindow() {
  return (
    <div className="absolute left-[140px] top-[68px] w-[958px] h-[556px] border border-[#6b9cb4] bg-white shadow-[1px_2px_4px_rgba(0,0,0,0.450)] flex flex-col">
      <div className="h-[18px] flex items-center pl-[6px] shrink-0">
        <div className="w-[438px] flex items-center">
          <CalIcon s="w-[11px] h-[11px]" />
          <Svg s="w-[11px] h-[11px] ml-[8px]" vb="0 0 11 11"><path d="M1 1h9v9H1z" fill="#fff" stroke="#7d4fa4" strokeWidth="1.200" /><path d="M3 1.500h5v3H3zM3 7h5v3H3z" fill="#f1e9f7" stroke="#7d4fa4" strokeWidth=".9" /></Svg>
          <span className="ml-[9px] flex"><Undo /></span>
          <span className="ml-[9px] flex"><Redo /></span>
          <span className="ml-[11px] flex"><ArrowUp /></span>
          <span className="ml-[11px] flex"><ArrowUp down /></span>
          <Caret className="ml-[10px]" />
        </div>
        <div className="w-[78px] -ml-[6px] text-[7.800px] text-[#606060] whitespace-nowrap">Report of IT - Meeting</div>
        <div className="ml-auto flex items-center pr-[5px] text-[8.500px] font-bold text-[#555]">
          <span className="mr-[13px]">?</span>
          <Svg s="w-[9px] h-[8px] mr-[12px]" vb="0 0 9 8"><path d="M.5.800h8v6.400h-8zM.5 2.300h8M4.500 6.500V3.500M3.200 4.800 4.500 3.500l1.300 1.300" stroke="#888" strokeWidth=".8" /></Svg>
          <div className="w-[6px] h-[1.500px] bg-[#555] mr-[13px] mt-[4px]" />
          <Svg s="w-[7px] h-[7px] mr-[12px]" vb="0 0 7 7"><path d="M.5.500h6v6h-6z" stroke="#777" /><path d="M0 1h7" stroke="#555" strokeWidth="1.800" /></Svg>
          <Cross s="w-[9px] h-[9px]" color="#555" w={1.600} />
        </div>
      </div>
      <div className="h-[16px] flex items-stretch text-[7.800px] text-[#666] shrink-0">
        <div className="w-[39px] bg-[#0072c6] text-white flex items-center justify-center">FILE</div>
        <div className="ml-[3px] w-[51px] -mb-px bg-white border border-b-0 border-[#d5d5d5] text-[#2a82bd] flex items-center justify-center relative">MEETING</div>
        <div className="ml-[10px] w-[45px] flex items-center tracking-[-0.1px]">INSERT</div>
        <div className="w-[71px] flex items-center whitespace-nowrap">FORMAT TEXT</div>
        <div className="flex items-center">REVIEW</div>
      </div>
      <Ribbon />
      <div className="flex flex-1 min-h-0">
        <Form />
        <RoomFinder />
      </div>
    </div>
  );
}

/* ---------- bottom bars ---------- */

function BottomBars() {
  return (
    <>
      <div className="h-[27px] bg-[#e4e4e4] flex items-center pl-[15px] pt-[1px] text-[17.300px] tracking-[-0.600px] font-light text-[#6a6a6a] shrink-0">
        <span className="w-[43px] text-[#3c8ac4]">Mail</span>
        <span className="w-[79px]">Calendar</span>
        <span className="w-[63px]">People</span>
        <span className="w-[51px]">Tasks</span>
        <div className="flex gap-[3px]">
          {[0, 1, 2].map(i => <div key={i} className="w-[3px] h-[3px] rounded-full bg-[#555]" />)}
        </div>
      </div>
      <div className="h-[15px] bg-[#0072c6] flex items-center pl-[6px] text-[7.300px] tracking-[-0.030px] text-white shrink-0">
        <span className="w-[741px]">ITEMS: 0</span>
        <span className="w-[215px] whitespace-pre">ALL FOLDERS ARE UP TO DATE.  UPDATING ADDRESS BOOK.</span>
        <span className="w-[152px] whitespace-nowrap">CONNECTED TO: MICROSOFT EXCHANGE</span>
        <div className="w-[23px] h-full bg-[#0061aa] flex items-center justify-center">
          <Svg s="w-[10px] h-[9px]" vb="0 0 10 9"><path d="M.7.700h8.600v7.600H.7z" stroke="#fff" strokeWidth="1.200" /><path d="M3 .5v8" stroke="#fff" strokeWidth="1.600" /></Svg>
        </div>
        <Svg s="w-[10px] h-[9px] ml-[9px]" vb="0 0 10 9"><path d="M0 1h4l1 1 1-1h4v6H6.500L5 8.500 3.500 7H0z" fill="#9cd0e8" /><path d="M5 2v5M1.500 3h2M6.500 3h2M1.500 5h2M6.500 5h2" stroke="#2878a8" strokeWidth=".8" /></Svg>
        <div className="ml-[18px] w-[67px] h-[7px] flex items-center">
          <div className="w-[33px] h-px bg-[#b8d8ee]" /><div className="w-[2px] h-[5px] bg-white" /><div className="flex-1 h-px bg-[#b8d8ee]" />
        </div>
        <span className="ml-[17px] text-[#b8d8ee]">10%</span>
      </div>
      <div className="h-[26px] flex items-center bg-linear-to-r from-[#7388a8] via-[#a6bbdb] via-[4%] to-[#a6bbdb] border-t border-[#c4d2e6] shrink-0">
        <Svg s="w-[24px] h-[24px] ml-[7px]" vb="0 0 24 24">
          <circle cx="12" cy="12" r="11.300" fill="#2a6a9e" stroke="#33506e" />
          <ellipse cx="12" cy="7" rx="8.500" ry="5.500" fill="#9cc4dc" opacity=".7" />
          <path d="M6 7.500c2-1.200 3.500-1 5 0l-.8 4c-1.700-.9-3.200-.9-5 .1z" fill="#ee6a2c" />
          <path d="M12 8c1.800.9 3.400.9 5.300-.1l-.9 4.100c-1.900.9-3.500.9-5.200 0z" fill="#92c83e" />
          <path d="M5 12.500c1.800-1 3.300-1 5 0l-.9 4.200c-1.600-1-3.200-1-5 0z" fill="#4aa8e8" />
          <path d="M11 13c1.800.9 3.300.9 5.200 0l-.9 4.100c-1.900.9-3.500.9-5.200 0z" fill="#fcd034" />
        </Svg>
        <Svg s="w-[20px] h-[20px] ml-[20px]" vb="0 0 20 20">
          <path d="M15.500 13.500A6 6 0 1 1 16.500 10H6" stroke="#2279c8" strokeWidth="3.200" />
          <path d="M2 18C-1 13 10 1 19 2c-8 1-14 8-15 14" fill="#f4c53c" stroke="#e0a820" strokeWidth=".6" />
        </Svg>
        <Svg s="w-[22px] h-[20px] ml-[20px]" vb="0 0 22 20">
          <path d="M1 3 2 1h6l1 2h11v14H1z" fill="#f0d878" stroke="#cca848" strokeWidth=".8" />
          <path d="M3 5h16v5H3z" fill="#fbf0b8" />
          <path d="M4 19v-6h14v6h-3v-3H7v3z" fill="#9cd0ee" stroke="#5fa8d4" strokeWidth=".8" />
          <path d="M12 2h5" stroke="#d05040" />
        </Svg>
        <Svg s="w-[19px] h-[18px] ml-[20px]" vb="0 0 19 18">
          <path d="M6 2h12v14H6z" fill="#a4d0ec" stroke="#70a8d0" strokeWidth=".8" />
          <path d="M1 1h12v15H1z" fill="#c0dcf0" stroke="#78a8cc" strokeWidth=".8" />
          <circle cx="8" cy="8.500" r="6" fill="#ec7a24" stroke="#fff" strokeWidth=".8" />
          <path d="m6 5 6 3.500L6 12z" fill="#fff" />
        </Svg>
        <div className="ml-[12px] w-[37px] h-[25px] border border-[#8194b0] rounded-[2px] bg-linear-to-b from-[#e4ebf5] to-[#c6d4e8] flex items-center justify-center">
          <Outlook s="w-[22px] h-[20px]" />
        </div>
        <div className="w-[3px] h-[25px] border-r border-[#8194b0] bg-[#c6d4e8]" />
        <div className="ml-auto h-full w-[127px] bg-linear-to-r from-[#a6bbdb] via-[#8496b2] via-20% to-[#7e90ac] flex items-center pl-[24px] text-white text-[7.500px] leading-[11px]">
          <Svg s="w-[5px] h-[3px]" vb="0 0 5 3"><path d="M2.500 0 5 3H0z" fill="#fff" /></Svg>
          <Svg s="w-[11px] h-[11px] ml-[8px]" vb="0 0 11 11"><path d="M3.500 1.500h7v6h-7z" fill="#667" stroke="#fff" /><path d="M1 1v4M3 1v4M2 5v5h4" stroke="#fff" /><path d="m7.500 4.500 3.500 6H4z" fill="#f6ca32" /></Svg>
          <Svg s="w-[12px] h-[10px] ml-[5px]" vb="0 0 12 10"><path d="M1 3.500h2L6 1v8L3 6.500H1z" fill="#fff" /><path d="M7.500 3c1 1 1 3 0 4M9 1.500c2 2 2 5 0 7" stroke="#e8eef8" strokeWidth=".9" /></Svg>
          <div className="w-[50px] ml-[2px] text-center tracking-[-0.1px]">7:50 PM<br />10/25/2016</div>
          <div className="ml-auto mr-[1px] w-[8px] h-full bg-linear-to-b from-[#4c5c74] to-[#8494ac] border-l border-[#a8b6ca]" />
        </div>
      </div>
      <div className="h-[15px] bg-[#f0f0f0] border-b-[1px] border-[#1c1c24] border-t border-t-white flex items-center pl-[1px] pr-[14px] text-[7.900px] text-[#333] shrink-0 overflow-hidden">
        <span className="mt-[3px] tracking-[-0.160px] leading-[10px]">To return to your computer, move the mouse pointer outside or press Ctrl+Alt.</span>
        <div className="ml-auto flex gap-[5px] items-center mt-[2px]">
          <Svg s="w-[11px] h-[9px]" vb="0 0 11 9"><path d="M0 6 2 1.500h7L11 6v3H0z" fill="#999" stroke="#666" strokeWidth=".7" /><circle cx="9" cy="7" r="1.800" fill="#3a9a34" /></Svg>
          <Svg s="w-[10px] h-[9px]" vb="0 0 11 9"><ellipse cx="5.500" cy="4.500" rx="5" ry="4" fill="#ddd" stroke="#888" /><circle cx="5.500" cy="4.500" r="1.300" fill="#999" /><circle cx="9" cy="7" r="1.800" fill="#3a9a34" /></Svg>
          <Svg s="w-[10px] h-[9px]" vb="0 0 11 9"><path d="M.5.800h6v4h-6zM4 4h6v4H4z" fill="#5a94d0" stroke="#2b5f98" /><circle cx="9" cy="7" r="1.800" fill="#3a9a34" /></Svg>
          <Svg s="w-[9px] h-[9px]" vb="0 0 10 9"><path d="M2 0h6v3H2zM0 3h10v4H0zM2 6h6v3H2z" fill="#ccc" stroke="#aaa" strokeWidth=".7" /></Svg>
          <Svg s="w-[10px] h-[9px]" vb="0 0 11 9"><path d="M1 3h2l4-3v9L3 6H1z" fill="#356a9e" /><circle cx="8.500" cy="6.500" r="2" fill="#3a9a34" /></Svg>
          <Svg s="w-[11px] h-[9px] ml-[5px]" vb="0 0 11 9"><path d="M.5.500h10v8h-7l-3-2z" fill="#e8c66c" stroke="#c09a44" strokeWidth=".7" /></Svg>
        </div>
      </div>
    </>
  );
}

export default function App() {
  return (
    <div className="relative w-[1280px] h-[720px] overflow-hidden bg-white flex flex-col font-['Open_Sans','Noto_Sans',sans-serif] leading-[1.300]">
      <HostHeader />
      <OutlookMain />
      <BottomBars />
      <MeetingWindow />
    </div>
  );
}
